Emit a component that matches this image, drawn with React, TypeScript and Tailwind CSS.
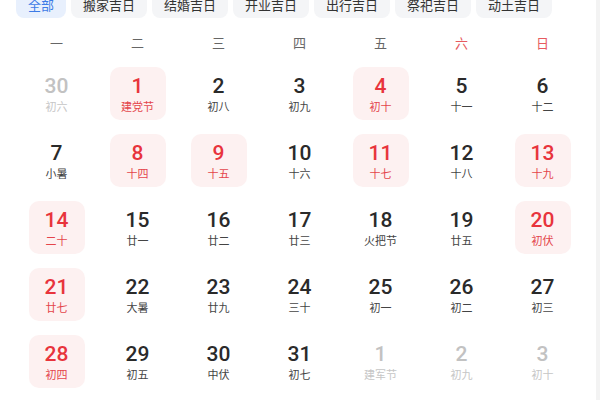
import React from 'react';

type Day = {
  d: number;
  lunar: string;
  other?: boolean;
  hl?: boolean;
};

const tabs = ['全部', '搬家吉日', '结婚吉日', '开业吉日', '出行吉日', '祭祀吉日', '动土吉日'];
const weekdays = ['一', '二', '三', '四', '五', '六', '日'];

const days: Day[] = [
  { d: 30, lunar: '初六', other: true },
  { d: 1, lunar: '建党节', hl: true },
  { d: 2, lunar: '初八' },
  { d: 3, lunar: '初九' },
  { d: 4, lunar: '初十', hl: true },
  { d: 5, lunar: '十一' },
  { d: 6, lunar: '十二' },
  { d: 7, lunar: '小暑' },
  { d: 8, lunar: '十四', hl: true },
  { d: 9, lunar: '十五', hl: true },
  { d: 10, lunar: '十六' },
  { d: 11, lunar: '十七', hl: true },
  { d: 12, lunar: '十八' },
  { d: 13, lunar: '十九', hl: true },
  { d: 14, lunar: '二十', hl: true },
  { d: 15, lunar: '廿一' },
  { d: 16, lunar: '廿二' },
  { d: 17, lunar: '廿三' },
  { d: 18, lunar: '火把节' },
  { d: 19, lunar: '廿五' },
  { d: 20, lunar: '初伏', hl: true },
  { d: 21, lunar: '廿七', hl: true },
  { d: 22, lunar: '大暑' },
  { d: 23, lunar: '廿九' },
  { d: 24, lunar: '三十' },
  { d: 25, lunar: '初一' },
  { d: 26, lunar: '初二' },
  { d: 27, lunar: '初三' },
  { d: 28, lunar: '初四', hl: true },
  { d: 29, lunar: '初五' },
  { d: 30, lunar: '中伏' },
  { d: 31, lunar: '初七' },
  { d: 1, lunar: '建军节', other: true },
  { d: 2, lunar: '初九', other: true },
  { d: 3, lunar: '初十', other: true },
];

const DayCell: React.FC<{ day: Day }> = ({ day }) => {
  const numColor = day.other ? 'text-[#c2c2c2]' : day.hl ? 'text-[#e8343c]' : 'text-[#2a2a2a]';
  const lunarColor = day.other ? 'text-[#c6c6c6]' : day.hl ? 'text-[#e4454b]' : 'text-[#444]';
  return (
    <div className="flex h-[67px] items-center justify-center">
      <div
        className={`flex h-[53px] w-[56px] flex-col items-center justify-center rounded-[10px] ${
          day.hl ? 'bg-[#fdf1f1]' : ''
        }`}
      >
        <div className={`font-['Roboto'] text-[21px] font-medium leading-[22px] ${numColor}`}>{day.d}</div>
        <div className={`mt-[2px] text-[11px] leading-[14px] ${lunarColor}`}>{day.lunar}</div>
      </div>
    </div>
  );
};

export default function App() {
  return (
    <div className="flex h-[400px] w-[600px] overflow-hidden bg-white font-['Noto_Sans_CJK_SC',sans-serif]">
      <div className="flex-1">
        <div className="-mt-[8px] ml-4 flex gap-[5px]">
          {tabs.map((t, i) => (
            <div
              key={t}
              className={`flex h-[26px] items-center rounded-[8px] px-3 text-[13px] ${
                i === 0 ? 'bg-[#e8f0fd] text-[#3d7be6]' : 'bg-[#f4f5f7] text-[#333]'
              }`}
            >
              {t}
            </div>
          ))}
        </div>

        <div className="ml-4 mt-3 grid w-[567px] grid-cols-7">
          {weekdays.map((w, i) => (
            <div
              key={w}
              className={`flex h-[26px] items-center justify-center text-[13px] ${
                i >= 5 ? 'text-[#e65a5f]' : 'text-[#666]'
              }`}
            >
              {w}
            </div>
          ))}
        </div>

        <div className="ml-4 mt-1 grid w-[567px] grid-cols-7">
          {days.map((day, i) => (
            <DayCell key={i} day={day} />
          ))}
        </div>
      </div>
      <div className="w-[4px] bg-[#f3f3f3]" />
    </div>
  );
}
